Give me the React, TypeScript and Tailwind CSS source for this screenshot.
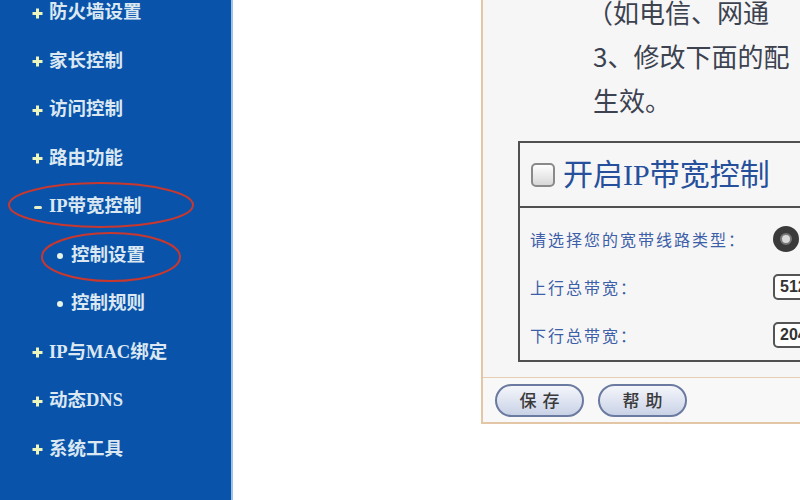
import React from 'react'

const cjk = '"Noto Sans CJK SC", "Noto Sans", sans-serif'
const mixed = '"Liberation Serif", "Noto Sans CJK SC", serif'

type NavItem = { label: string; mark: 'plus' | 'minus' | 'dot'; sub?: boolean }

const nav: NavItem[] = [
  { label: '防火墙设置', mark: 'plus' },
  { label: '家长控制', mark: 'plus' },
  { label: '访问控制', mark: 'plus' },
  { label: '路由功能', mark: 'plus' },
  { label: 'IP带宽控制', mark: 'minus' },
  { label: '控制设置', mark: 'dot', sub: true },
  { label: '控制规则', mark: 'dot', sub: true },
  { label: 'IP与MAC绑定', mark: 'plus' },
  { label: '动态DNS', mark: 'plus' },
  { label: '系统工具', mark: 'plus' },
]

const Mark = ({ kind }: { kind: NavItem['mark'] }) => {
  if (kind === 'minus') {
    return <span className="inline-block w-[8px] h-[3px] bg-[#e8f0c8] rounded-sm" />
  }
  if (kind === 'dot') {
    return <span className="inline-block w-[6px] h-[6px] bg-[#e8f4e6] rounded-full" />
  }
  return (
    <svg width="11" height="11" viewBox="0 0 11 11">
      <path d="M4 0.5 H7 V4 H10.5 V7 H7 V10.5 H4 V7 H0.5 V4 H4 Z" fill="#eef6bc" />
    </svg>
  )
}

const Sidebar = () => (
  <div className="relative w-[233px] h-[500px] shrink-0 bg-[#0a53aa] border-r-2 border-[#9cc4ea]">
    <div className="flex flex-col -mt-[11px]">
      {nav.map((item) => (
        <div
          key={item.label}
          className={`h-[48.5px] flex items-center gap-[6px] ${item.sub ? 'pl-[54px]' : 'pl-[32px]'}`}
        >
          <span className="w-[11px] flex justify-center">
            <Mark kind={item.mark} />
          </span>
          <span
            className="text-[18.5px] font-semibold text-[#dbe8f2]"
            style={{ fontFamily: mixed }}
          >
            {item.label}
          </span>
        </div>
      ))}
    </div>
    {/* red hand-drawn highlights */}
    <svg className="absolute left-0 top-0 pointer-events-none" width="233" height="500">
      <ellipse cx="101" cy="205" rx="92" ry="22" fill="none" stroke="#c8382e" strokeWidth="2" />
      <ellipse cx="111" cy="257" rx="69" ry="24" fill="none" stroke="#c8382e" strokeWidth="2" />
    </svg>
  </div>
)

const PillButton = ({ label }: { label: string }) => (
  <button
    className="w-[89px] h-[33px] rounded-full border-2 border-[#6a7aa0] bg-gradient-to-b from-[#f4f6fb] to-[#c9d2e6] text-[17px] font-medium text-[#3a3a3a] tracking-[6px] pl-[6px]"
    style={{ fontFamily: cjk }}
  >
    {label}
  </button>
)

const Row = ({ label, children }: { label: string; children: React.ReactNode }) => (
  <div className="flex items-center">
    <span className="w-[243px] text-[16px] tracking-[2px] text-[#3d5ea8]" style={{ fontFamily: cjk }}>
      {label}
    </span>
    {children}
  </div>
)

const ValueBox = ({ value }: { value: string }) => (
  <div
    className="w-[60px] h-[26px] rounded-[5px] border-2 border-[#555] bg-white flex items-center pl-[5px] text-[16px] font-bold text-[#333]"
    style={{ fontFamily: '"Liberation Sans", sans-serif' }}
  >
    {value}
  </div>
)

const Panel = () => (
  <div className="w-[380px] shrink-0 ml-[248px] h-[424px] border-l-2 border-b-2 border-[#e2c6a6] bg-[#f6f6f6] flex flex-col">
    <div
      className="pl-[110px] text-[26px] leading-[44px] text-[#3c4250] -mt-[10px]"
      style={{ fontFamily: cjk }}
    >
      <div className="-ml-[6px]">（如电信、网通</div>
      <div>3、修改下面的配</div>
      <div>生效。</div>
    </div>

    <div className="ml-[35px] mt-[19px] w-[400px] border-2 border-[#505050]">
      <div className="h-[65px] flex items-center pl-[11px] gap-[8px] border-b-2 border-[#505050]">
        <span className="w-[24px] h-[24px] rounded-[5px] border-2 border-[#8a8a8a] bg-gradient-to-b from-white to-[#d8d8d8]" />
        <span className="text-[30px] text-[#264f9c]" style={{ fontFamily: mixed }}>
          开启IP带宽控制
        </span>
      </div>
      <div className="pl-[10px] pt-[18px] pb-[12px] flex flex-col gap-[22px]">
        <Row label="请选择您的宽带线路类型：">
          <span className="w-[26px] h-[26px] rounded-full bg-[#3a3a3a] flex items-center justify-center">
            <span className="w-[12px] h-[12px] rounded-full bg-[#d8d8d8] border-2 border-[#777]" />
          </span>
        </Row>
        <Row label="上行总带宽：">
          <ValueBox value="512" />
        </Row>
        <Row label="下行总带宽：">
          <ValueBox value="2048" />
        </Row>
      </div>
    </div>

    <div className="mt-auto border-t border-[#e8cdb0] h-[45px] flex items-center gap-[14px] pl-[12px] bg-[#f8f8f8]">
      <PillButton label="保存" />
      <PillButton label="帮助" />
    </div>
  </div>
)

export default function App() {
  return (
    <div className="w-[800px] h-[500px] overflow-hidden flex bg-white">
      <Sidebar />
      <Panel />
    </div>
  )
}
